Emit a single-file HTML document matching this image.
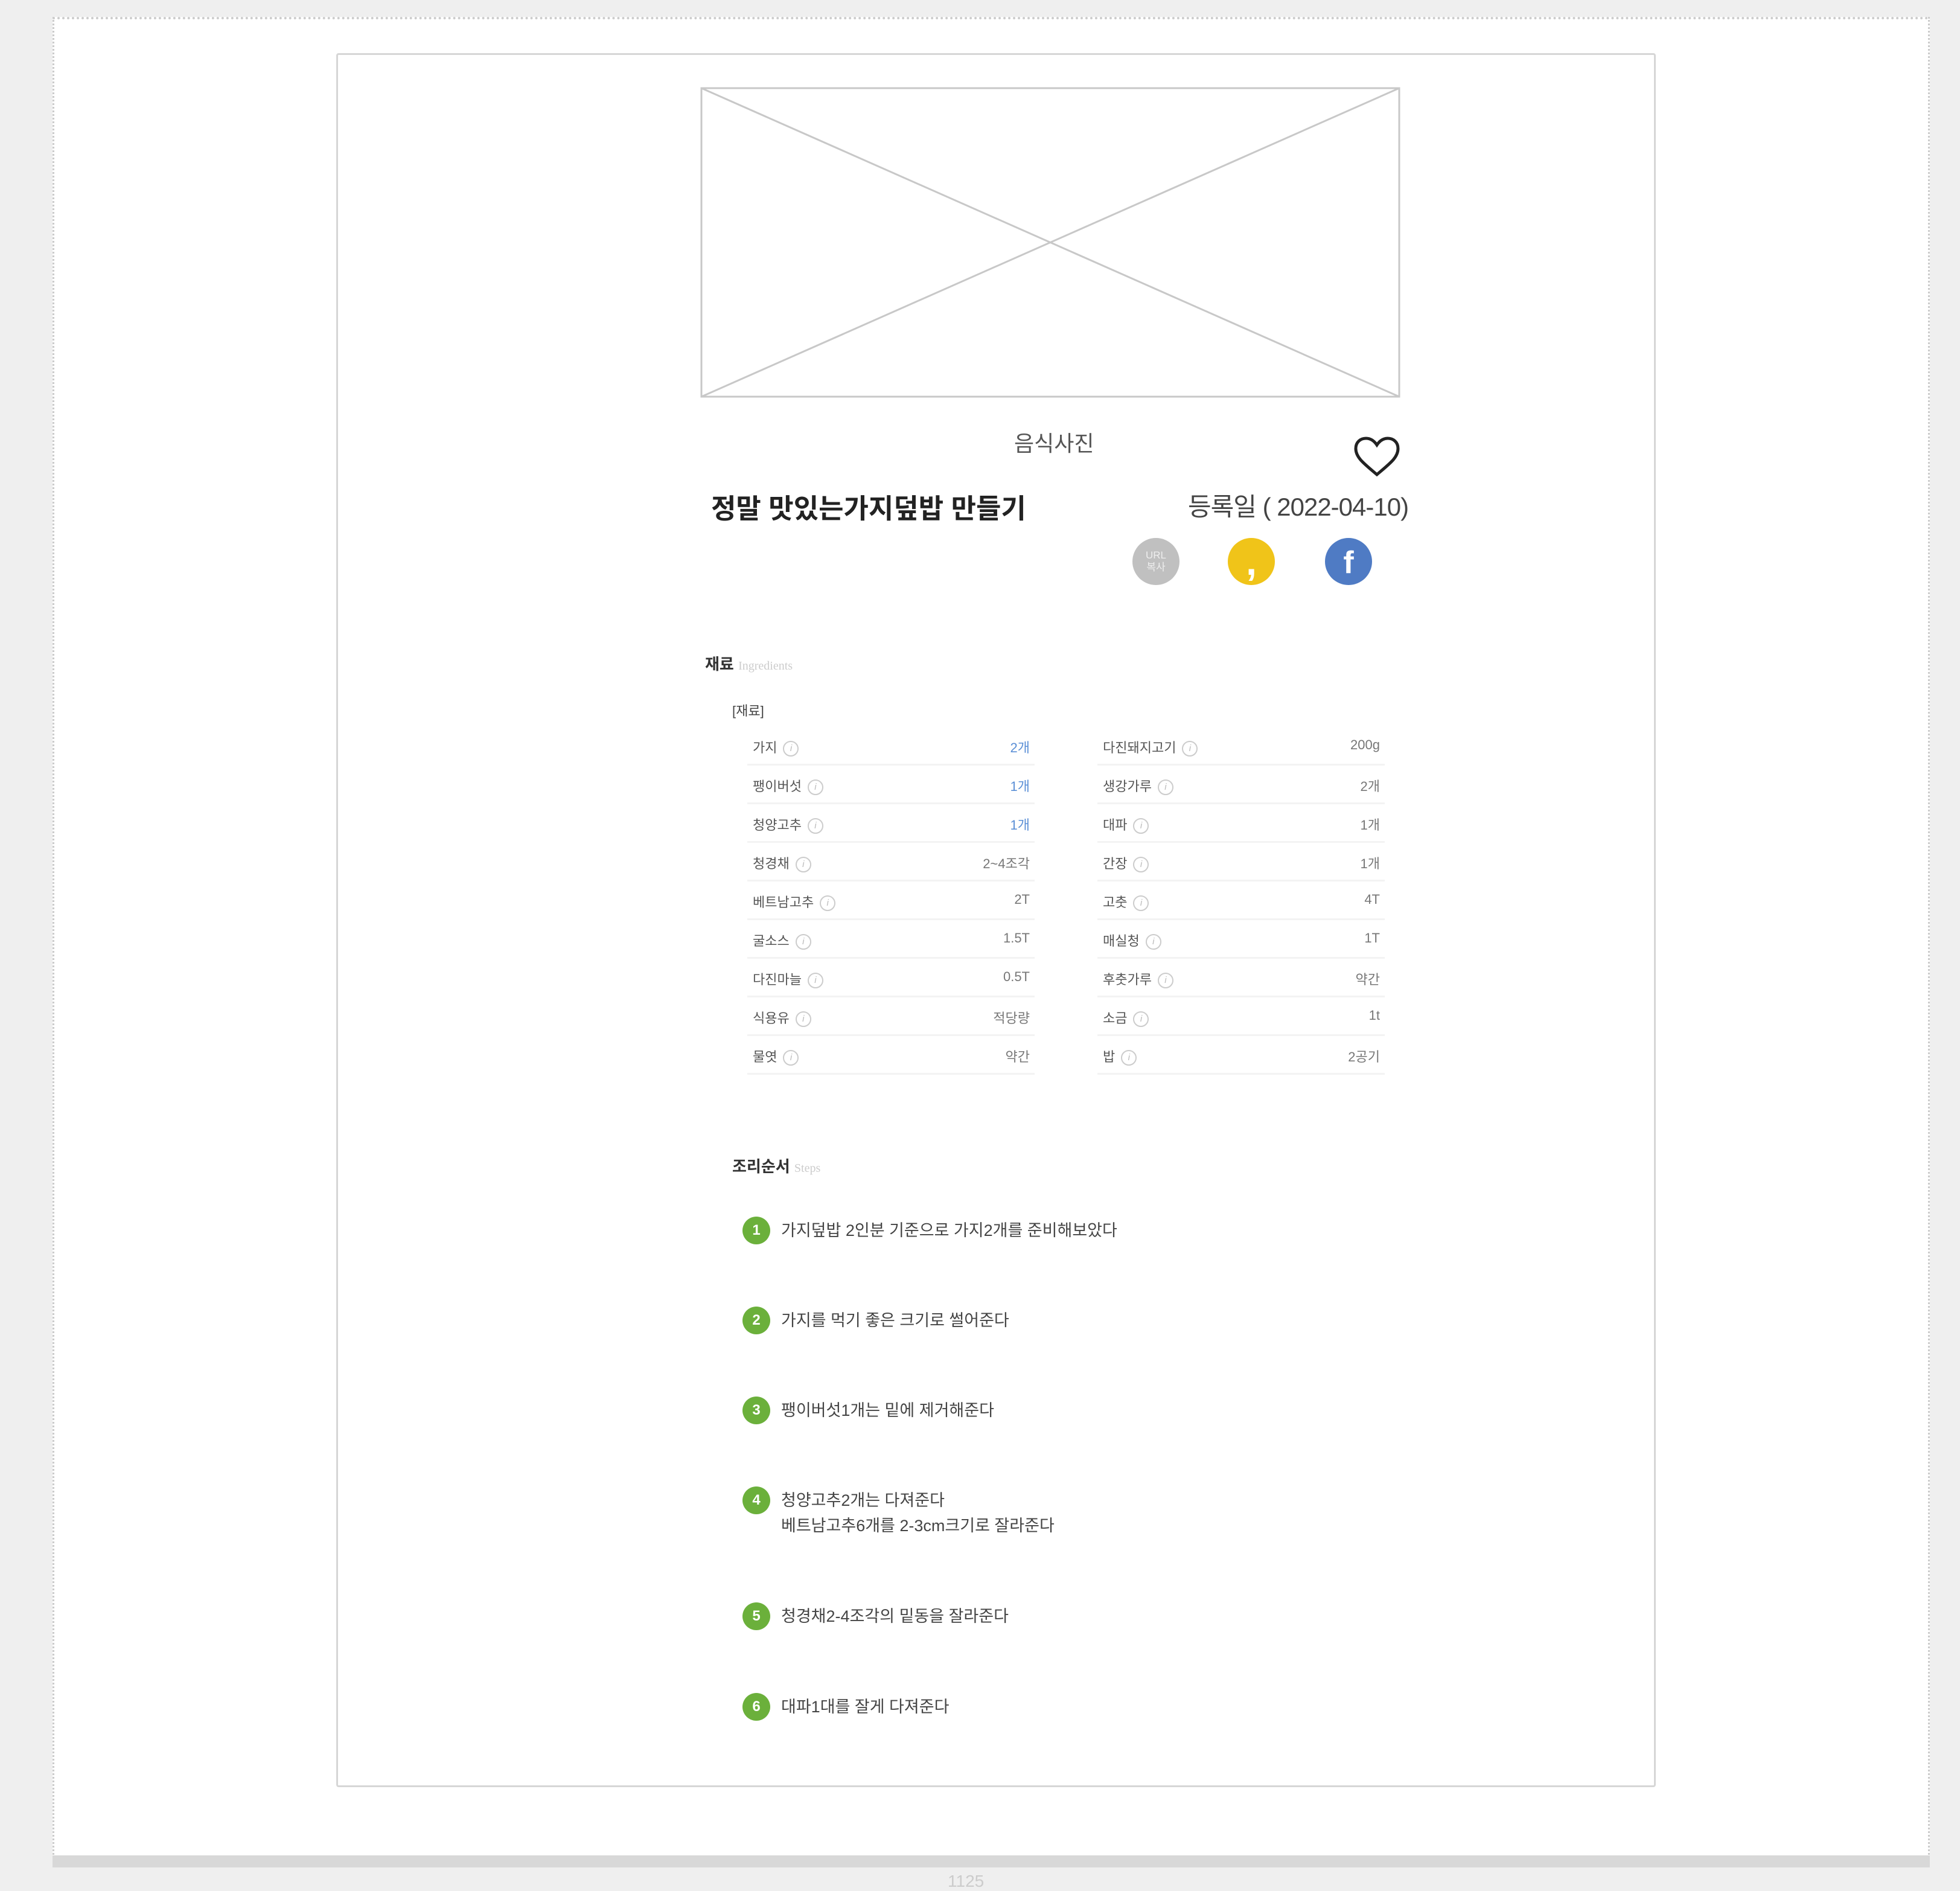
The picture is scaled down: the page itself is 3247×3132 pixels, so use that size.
<!DOCTYPE html>
<html><head><meta charset="utf-8"><style>
body{margin:0;width:3247px;height:3118px;background:#efefef;position:relative;overflow:hidden;font-family:"Liberation Sans","Noto Sans CJK KR",sans-serif;}
.a{position:absolute;}
.page{left:87px;top:28px;width:3104px;height:3045px;background:#fff;border-top:4px dotted #ccc;border-left:3px dotted #ccc;border-right:3px dotted #ccc;}
.band{left:87px;top:3073px;width:3110px;height:20px;background:#d8d8d8;}
.inner{left:557px;top:88px;width:2180px;height:2866px;border:3px solid #d6d6d6;border-radius:4px;background:#fff;}
.row{position:absolute;height:62px;border-bottom:3px solid #f3f3f3;font-size:22px;color:#555;}
.row .n{position:absolute;left:9px;top:18px;}
.row .n i{display:inline-block;width:22px;height:22px;border:2px solid #ccc;border-radius:50%;font-size:15px;color:#bbb;text-align:center;line-height:22px;font-style:italic;margin-left:10px;vertical-align:middle;}
.row .v{position:absolute;right:8px;top:18px;color:#777;}
.st{position:absolute;left:1230px;font-size:27px;color:#444;line-height:42px;}
.st b{position:absolute;left:0;top:-2px;width:46px;height:46px;border-radius:50%;background:#6bb03b;color:#fff;font-size:24px;text-align:center;line-height:46px;}
.st span{position:absolute;left:64px;top:0;white-space:nowrap;}
</style></head><body>
<div class="a page"></div>
<div class="a band"></div>
<div class="a" style="left:1570px;top:3100px;font-size:28px;color:#ccc;">1125</div>
<div class="a inner"></div>
<svg class="a" style="left:1160px;top:144px" width="1160" height="515"><rect x="2" y="2" width="1156" height="511" fill="#fff" stroke="#c8c8c8" stroke-width="3"/><line x1="2" y1="2" x2="1158" y2="513" stroke="#c8c8c8" stroke-width="3"/><line x1="1158" y1="2" x2="2" y2="513" stroke="#c8c8c8" stroke-width="3"/></svg>
<div class="a" style="left:1680px;top:706px;font-size:36px;color:#555;">음식사진</div>
<svg class="a" style="left:2240px;top:722px" width="82" height="70"><path d="M41 64 C20 46 6 36 6 21 C6 10 14 4 23 4 C31 4 37 9 41 15 C45 9 51 4 59 4 C68 4 76 10 76 21 C76 36 62 46 41 64Z" fill="none" stroke="#222" stroke-width="5"/></svg>
<div class="a" style="left:1178px;top:806px;font-size:45px;font-weight:bold;color:#222;">정말 맛있는가지덮밥 만들기</div>
<div class="a" style="left:1968px;top:806px;font-size:42px;letter-spacing:-1px;color:#444;">등록일 ( 2022-04-10)</div>
<div class="a" style="left:1876px;top:891px;width:78px;height:78px;border-radius:50%;background:#c0c0c0;color:#eee;font-size:17px;text-align:center;line-height:20px;padding-top:19px;box-sizing:border-box;">URL<br>복사</div>
<div class="a" style="left:2034px;top:891px;width:78px;height:78px;border-radius:50%;background:#f0c419;color:#fff;font-size:64px;font-weight:bold;text-align:center;line-height:78px;">,</div>
<div class="a" style="left:2195px;top:891px;width:78px;height:78px;border-radius:50%;background:#4f7bc4;color:#fff;font-size:52px;font-weight:bold;text-align:center;line-height:82px;">f</div>
<div class="a" style="left:1168px;top:1080px;font-size:26px;font-weight:bold;color:#333;">재료 <span style="font-weight:normal;color:#ccc;font-size:20px;font-family:'Liberation Serif',serif;">Ingredients</span></div>
<div class="a" style="left:1213px;top:1160px;font-size:22px;color:#444;">[재료]</div>
<div class="a" style="left:1238px;top:1203px;width:476px;">
<div class="row" style="top:0;width:476px"><span class="n">가지<i>i</i></span><span class="v" style="color:#5b8fd6">2개</span></div>
<div class="row" style="top:64px;width:476px"><span class="n">팽이버섯<i>i</i></span><span class="v" style="color:#5b8fd6">1개</span></div>
<div class="row" style="top:128px;width:476px"><span class="n">청양고추<i>i</i></span><span class="v" style="color:#5b8fd6">1개</span></div>
<div class="row" style="top:192px;width:476px"><span class="n">청경채<i>i</i></span><span class="v">2~4조각</span></div>
<div class="row" style="top:256px;width:476px"><span class="n">베트남고추<i>i</i></span><span class="v">2T</span></div>
<div class="row" style="top:320px;width:476px"><span class="n">굴소스<i>i</i></span><span class="v">1.5T</span></div>
<div class="row" style="top:384px;width:476px"><span class="n">다진마늘<i>i</i></span><span class="v">0.5T</span></div>
<div class="row" style="top:448px;width:476px"><span class="n">식용유<i>i</i></span><span class="v">적당량</span></div>
<div class="row" style="top:512px;width:476px"><span class="n">물엿<i>i</i></span><span class="v">약간</span></div>
</div>
<div class="a" style="left:1818px;top:1203px;width:476px;">
<div class="row" style="top:0;width:476px"><span class="n">다진돼지고기<i>i</i></span><span class="v">200g</span></div>
<div class="row" style="top:64px;width:476px"><span class="n">생강가루<i>i</i></span><span class="v">2개</span></div>
<div class="row" style="top:128px;width:476px"><span class="n">대파<i>i</i></span><span class="v">1개</span></div>
<div class="row" style="top:192px;width:476px"><span class="n">간장<i>i</i></span><span class="v">1개</span></div>
<div class="row" style="top:256px;width:476px"><span class="n">고춧<i>i</i></span><span class="v">4T</span></div>
<div class="row" style="top:320px;width:476px"><span class="n">매실청<i>i</i></span><span class="v">1T</span></div>
<div class="row" style="top:384px;width:476px"><span class="n">후춧가루<i>i</i></span><span class="v">약간</span></div>
<div class="row" style="top:448px;width:476px"><span class="n">소금<i>i</i></span><span class="v">1t</span></div>
<div class="row" style="top:512px;width:476px"><span class="n">밥<i>i</i></span><span class="v">2공기</span></div>
</div>
<div class="a" style="left:1213px;top:1912px;font-size:26px;font-weight:bold;color:#333;">조리순서 <span style="font-weight:normal;color:#ccc;font-size:20px;font-family:'Liberation Serif',serif;">Steps</span></div>
<div class="st" style="top:2017px"><b>1</b><span>가지덮밥 2인분 기준으로 가지2개를 준비해보았다</span></div>
<div class="st" style="top:2166px"><b>2</b><span>가지를 먹기 좋은 크기로 썰어준다</span></div>
<div class="st" style="top:2315px"><b>3</b><span>팽이버섯1개는 밑에 제거해준다</span></div>
<div class="st" style="top:2464px"><b>4</b><span>청양고추2개는 다져준다<br>베트남고추6개를 2-3cm크기로 잘라준다</span></div>
<div class="st" style="top:2656px"><b>5</b><span>청경채2-4조각의 밑동을 잘라준다</span></div>
<div class="st" style="top:2806px"><b>6</b><span>대파1대를 잘게 다져준다</span></div>
</body></html>
